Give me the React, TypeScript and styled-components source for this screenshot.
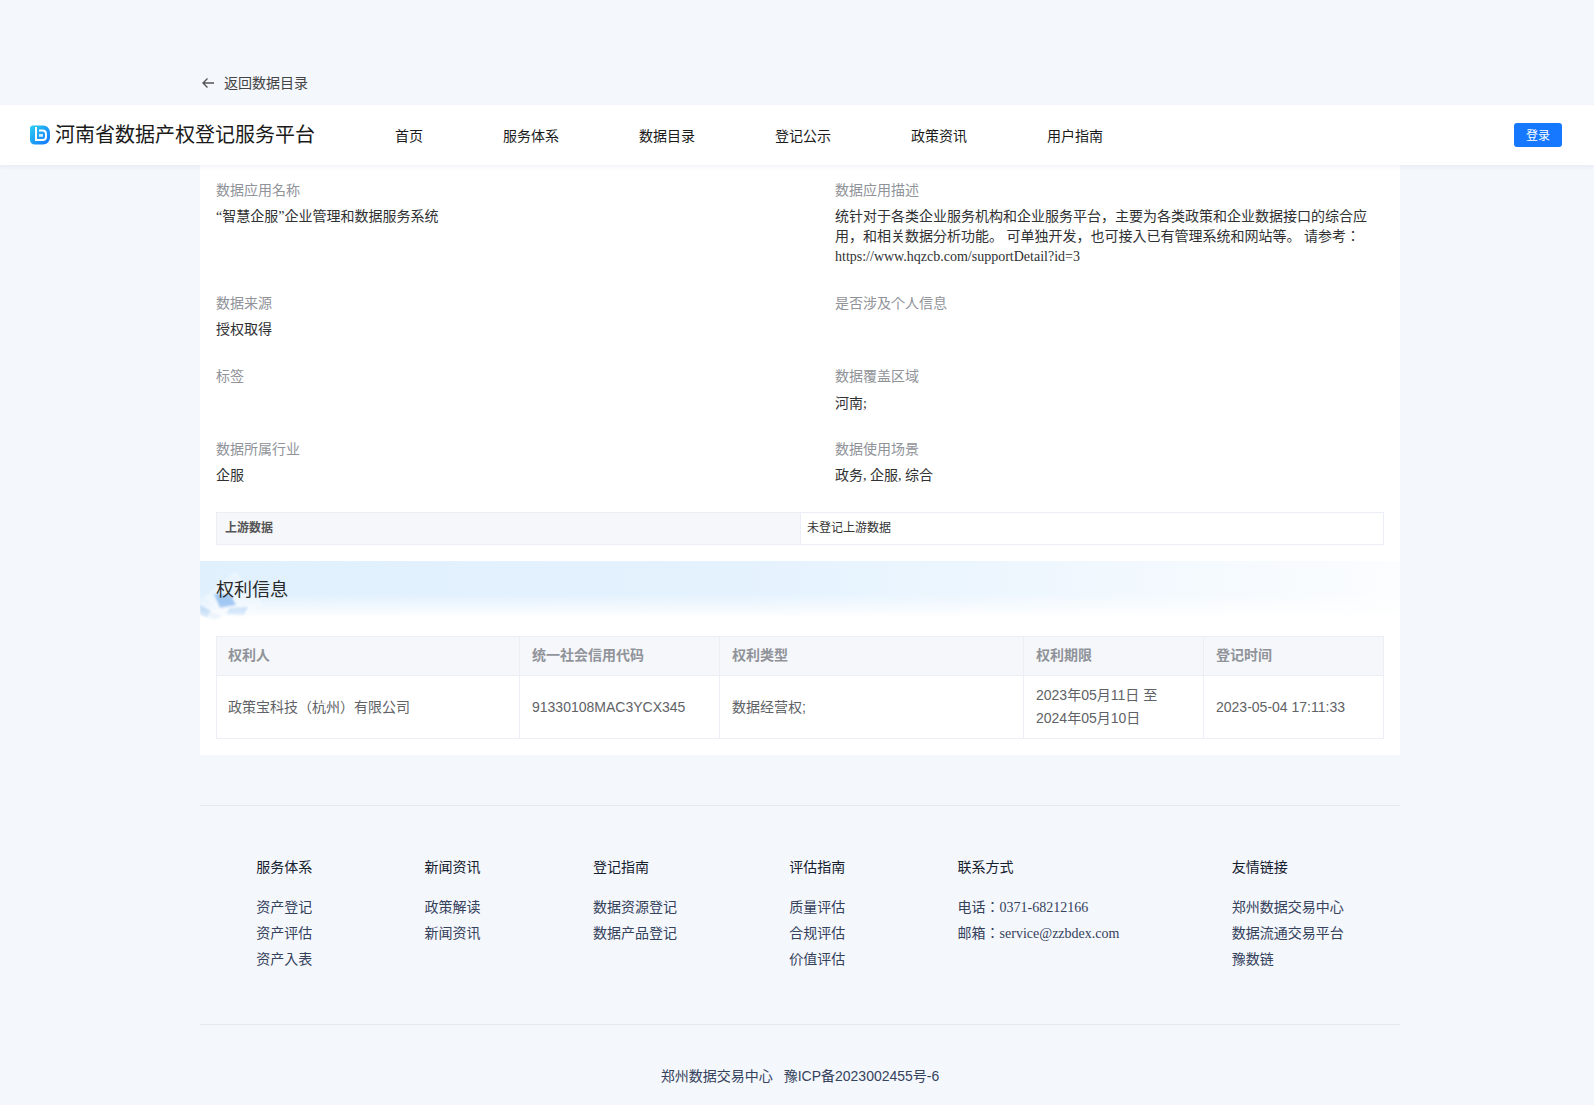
import React from 'react';
import styled, { createGlobalStyle } from 'styled-components';

const SERIF = `"Liberation Serif", "Noto Sans CJK JP", serif`;
const SANS = `"Liberation Sans", "Noto Sans CJK JP", sans-serif`;

const Global = createGlobalStyle`
  html, body { margin: 0; padding: 0; background: #f4f7fc; overflow: hidden; }
  body { font-family: ${SERIF}; font-size: 14px; color: #1a1a1a; }
  * { box-sizing: border-box; }
`;

const Page = styled.div`
  width: 1600px;
  height: 1105px;
  overflow: hidden;
`;
const TopBar = styled.div`
  width: 1200px;
  height: 105px;
  margin: 0 auto;
  padding-top: 73px;
  padding-left: 1px;
`;
const BackLink = styled.a`
  display: flex;
  align-items: center;
  gap: 9px;
  height: 20px;
  line-height: 20px;
  color: #444;
  font-size: 14px;
  font-family: ${SANS};
`;
const Header = styled.header`
  position: relative;
  z-index: 2;
  width: 1594px;
  height: 60px;
  background: #fff;
  display: flex;
  align-items: center;
  padding: 0 32px 0 30px;
  box-shadow: 0 2px 4px rgba(180, 190, 210, 0.18);
`;
const Brand = styled.div`
  display: flex;
  align-items: center;
  gap: 5px;
  width: 365px;
  font-size: 20px;
  line-height: 26px;
  color: #1a1a1a;
  font-family: ${SANS};
`;
const BrandName = styled.span`
  margin-top: -1px;
`;
const Nav = styled.nav`
  display: flex;
  gap: 80px;
  flex: 1;
  padding-top: 4px;
`;
const NavItem = styled.a`
  font-size: 14px;
  line-height: 20px;
  color: #1a1a1a;
`;
const LoginButton = styled.button`
  width: 48px;
  height: 24px;
  padding: 0 0 2px;
  border: 0;
  border-radius: 3px;
  background: #1677ff;
  color: #fff;
  font-family: ${SANS};
  font-size: 12px;
`;
const Main = styled.main`
  width: 1200px;
  height: 590px;
  margin: 0 auto;
  background: #fff;
  padding: 15px 16px 0;
`;
const InfoGrid = styled.div`
  display: grid;
  grid-template-columns: 619px 532px;
`;
const InfoItem = styled.div`
  padding-bottom: 26px;
`;
const Label = styled.div`
  font-size: 14px;
  line-height: 20px;
  color: #909399;
  font-family: ${SANS};
`;
const Value = styled.div<{ $low?: boolean }>`
  margin-top: ${(p) => (p.$low ? '8px' : '7px')};
  margin-bottom: ${(p) => (p.$low ? '-1px' : '0')};
  min-height: 20px;
  font-size: 14px;
  line-height: 20px;
  color: #303133;
`;
const UpstreamRow = styled.div`
  display: grid;
  grid-template-columns: 584px 1fr;
  height: 33px;
  border: 1px solid #ebeef5;
  font-family: ${SANS};
  font-size: 12px;
  line-height: 30px;
`;
const UpstreamLabel = styled.div`
  background: #f5f7fa;
  padding-left: 8px;
  font-weight: 700;
  color: #555;
  border-right: 1px solid #ebeef5;
`;
const UpstreamValue = styled.div`
  padding-left: 6px;
  color: #333;
`;
const Banner = styled.div`
  position: relative;
  height: 60px;
  margin: 16px -16px 15px;
  padding-left: 16px;
  overflow: hidden;
  background:
    linear-gradient(180deg, rgba(255,255,255,0) 55%, #fff 95%),
    linear-gradient(90deg, #e0f0fd 0%, #e4f2fe 45%, #f1f8fe 75%, #fbfdff 100%);
`;
const BannerArt = styled.svg`
  position: absolute;
  left: 0;
  top: 0;
`;
const BannerTitle = styled.h2`
  position: relative;
  margin: 0;
  font-size: 18px;
  font-weight: 400;
  line-height: 58px;
  color: #2a2a2a;
  font-family: ${SANS};
`;
const Table = styled.table`
  width: 1167px;
  table-layout: fixed;
  border-collapse: collapse;
  font-family: ${SANS};
  font-size: 14px;
`;
const Th = styled.th`
  padding: 7px 12px 8px;
  height: 39px;
  line-height: 23px;
  text-align: left;
  font-weight: 700;
  color: #909399;
  background: #f5f7fa;
  border: 1px solid #ebeef5;
  &:first-child { padding-left: 11px; }
`;
const Td = styled.td`
  padding: 8px 12px;
  line-height: 23px;
  color: #606266;
  border: 1px solid #ebeef5;
  &:first-child { padding-left: 11px; }
`;
const Footer = styled.footer`
  width: 1200px;
  margin: 50px auto 0;
  border-top: 1px solid #e6e9ef;
`;
const FooterColumns = styled.div`
  display: flex;
  justify-content: space-around;
  height: 219px;
  padding-top: 52px;
  border-bottom: 1px solid #e6e9ef;
`;
const FooterColumn = styled.div`
  display: flex;
  flex-direction: column;
`;
const FooterHeading = styled.div`
  line-height: 20px;
  margin-bottom: 17px;
  color: #15202f;
  font-size: 14px;
`;
const FooterLink = styled.a`
  line-height: 26px;
  font-size: 14px;
  color: #35425c;
`;
const Copyright = styled.div`
  display: flex;
  justify-content: center;
  gap: 11px;
  padding-top: 41px;
  line-height: 20px;
  font-family: ${SANS};
  font-size: 14px;
  color: #35425c;
`;

const Logo = () => (
  <svg width="20" height="20" viewBox="0 0 20 20">
    <defs>
      <linearGradient id="lg" x1="0" y1="0" x2="1" y2="1">
        <stop offset="0" stopColor="#2bd0f0" />
        <stop offset="1" stopColor="#1372ff" />
      </linearGradient>
    </defs>
    <path d="M3 0.5H13C17 0.5 20 3.5 20 8V12C20 16.5 17 19.5 13 19.5H5C2 19.5 0 17.5 0 15V3C0 1.5 1.3 0.5 3 0.5Z" fill="url(#lg)" />
    <path d="M6 2V15H12.5C15 15 16 13.5 16 11.5V9.5C16 7 15 5.5 12.5 5.5H9" fill="none" stroke="#fff" strokeWidth="2" />
    <rect x="9" y="9" width="4" height="2.8" fill="#cdeefb" />
  </svg>
);

const BackArrow = () => (
  <svg width="14" height="14" viewBox="0 0 14 14" fill="none" stroke="#555" strokeWidth="1.4">
    <path d="M13 7H2M6.5 2.5L2 7L6.5 11.5" />
  </svg>
);

const items: [string, string, boolean?][] = [
  ['数据应用名称', '“智慧企服”企业管理和数据服务系统'],
  ['数据应用描述', '统针对于各类企业服务机构和企业服务平台，主要为各类政策和企业数据接口的综合应用，和相关数据分析功能。 可单独开发，也可接入已有管理系统和网站等。 请参考：https://www.hqzcb.com/supportDetail?id=3'],
  ['数据来源', '授权取得'],
  ['是否涉及个人信息', ''],
  ['标签', ''],
  ['数据覆盖区域', '河南;', true],
  ['数据所属行业', '企服'],
  ['数据使用场景', '政务, 企服, 综合'],
];

const nav = ['首页', '服务体系', '数据目录', '登记公示', '政策资讯', '用户指南'];
const cols = [303, 200, 304, 180, 180];
const heads = ['权利人', '统一社会信用代码', '权利类型', '权利期限', '登记时间'];

const footer: [string, string[]][] = [
  ['服务体系', ['资产登记', '资产评估', '资产入表']],
  ['新闻资讯', ['政策解读', '新闻资讯']],
  ['登记指南', ['数据资源登记', '数据产品登记']],
  ['评估指南', ['质量评估', '合规评估', '价值评估']],
  ['联系方式', ['电话：0371-68212166', '邮箱：service@zzbdex.com']],
  ['友情链接', ['郑州数据交易中心', '数据流通交易平台', '豫数链']],
];

export default function App() {
  return (
    <Page>
      <Global />
      <TopBar>
        <BackLink><BackArrow />返回数据目录</BackLink>
      </TopBar>
      <Header>
        <Brand><Logo /><BrandName>河南省数据产权登记服务平台</BrandName></Brand>
        <Nav>{nav.map((n) => <NavItem key={n}>{n}</NavItem>)}</Nav>
        <LoginButton>登录</LoginButton>
      </Header>
      <Main>
        <InfoGrid>
          {items.map(([l, v, low]) => (
            <InfoItem key={l}>
              <Label>{l}</Label>
              <Value $low={low}>{v}</Value>
            </InfoItem>
          ))}
        </InfoGrid>
        <UpstreamRow>
          <UpstreamLabel>上游数据</UpstreamLabel>
          <UpstreamValue>未登记上游数据</UpstreamValue>
        </UpstreamRow>
        <Banner>
          <BannerArt width="70" height="60" viewBox="0 0 70 60">
            <defs>
              <linearGradient id="fade" x1="0" y1="0" x2="0" y2="1">
                <stop offset="0.7" stopColor="#fff" stopOpacity="1" />
                <stop offset="1" stopColor="#fff" stopOpacity="0.35" />
              </linearGradient>
              <mask id="fm"><rect width="70" height="60" fill="url(#fade)" /></mask>
              <filter id="soft"><feGaussianBlur stdDeviation="1" /></filter>
            </defs>
            <g mask="url(#fm)" filter="url(#soft)">
              <polygon points="35,11 62,43 33,60 5,36" fill="#ffffff" opacity="0.28" />
              <polygon points="35,11 62,43 33,60 5,36" fill="none" stroke="#ffffff" strokeWidth="1" opacity="0.5" />
              <polygon points="14,33 30,33 36,44 20,47" fill="#8dbcf0" opacity="0.8" />
              <polygon points="30,47 48,46 44,54 26,53" fill="#b4d4f5" opacity="0.75" />
              <polygon points="0,44 11,50 7,57 0,53" fill="#a6cbf2" opacity="0.75" />
              <polygon points="12,52 22,55 16,59 8,57" fill="#cfe3f8" opacity="0.7" />
            </g>
          </BannerArt>
          <BannerTitle>权利信息</BannerTitle>
        </Banner>
        <Table>
          <colgroup>{cols.map((w, i) => <col key={i} width={w} />)}</colgroup>
          <thead>
            <tr>{heads.map((h) => <Th key={h}>{h}</Th>)}</tr>
          </thead>
          <tbody>
            <tr>
              <Td>政策宝科技（杭州）有限公司</Td>
              <Td>91330108MAC3YCX345</Td>
              <Td>数据经营权;</Td>
              <Td>2023年05月11日 至 2024年05月10日</Td>
              <Td>2023-05-04 17:11:33</Td>
            </tr>
          </tbody>
        </Table>
      </Main>
      <Footer>
        <FooterColumns>
          {footer.map(([h, links]) => (
            <FooterColumn key={h}>
              <FooterHeading>{h}</FooterHeading>
              {links.map((k) => <FooterLink key={k}>{k}</FooterLink>)}
            </FooterColumn>
          ))}
        </FooterColumns>
        <Copyright><span>郑州数据交易中心</span><span>豫ICP备2023002455号-6</span></Copyright>
      </Footer>
    </Page>
  );
}
